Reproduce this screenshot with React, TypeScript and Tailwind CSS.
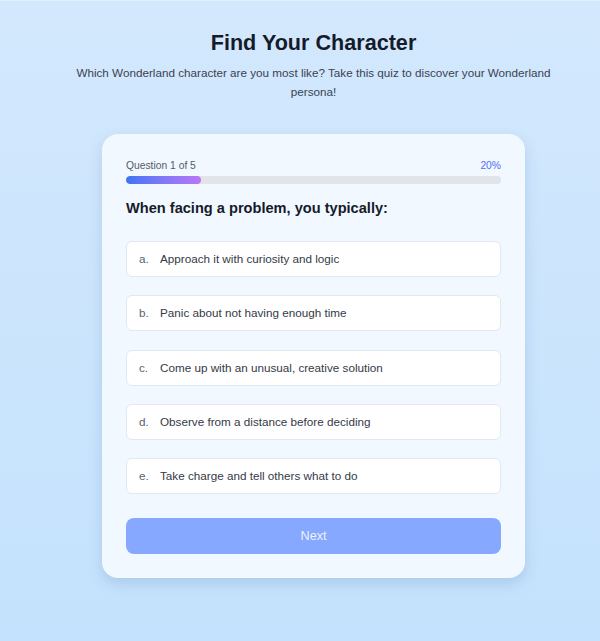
import { useState } from "react";

const question = {
  text: "When facing a problem, you typically:",
  options: [
    "Approach it with curiosity and logic",
    "Panic about not having enough time",
    "Come up with an unusual, creative solution",
    "Observe from a distance before deciding",
    "Take charge and tell others what to do",
  ],
};

const letters = ["a", "b", "c", "d", "e"];

export default function App() {
  const [selected, setSelected] = useState<number | null>(null);

  return (
    <div
      className="min-h-[641px] bg-gradient-to-b from-[#d3e8fd] to-[#c4e2fd] pt-[28px] pb-10 pl-[27px] border-t border-[#e4f0fc]"
      style={{ fontFamily: '"Liberation Sans", Arial, sans-serif' }}
    >
      {/* ── Header ── */}
      <div className="text-center px-6">
        <h1 className="text-[21.6px] leading-[28px] font-bold text-[#161b2a]">
          Find Your Character
        </h1>
        <p className="mt-[6px] mx-auto max-w-[500px] text-[11.7px] leading-[19px] text-[#3b4252]">
          Which Wonderland character are you most like? Take this quiz to discover your Wonderland
          persona!
        </p>
      </div>

      {/* ── Card ── */}
      <div className="mx-auto mt-[33px] w-[423px] rounded-2xl bg-[#f1f8ff] px-6 pt-[25px] pb-[24px] shadow-[0_6px_14px_rgba(80,120,170,0.22)]">
        {/* Progress */}
        <div className="flex items-center justify-between text-[10.3px] leading-[14px]">
          <span className="text-[#555b66]">Question 1 of 5</span>
          <span className="text-[#4f6ef2]">20%</span>
        </div>
        <div className="mt-[3px] h-2 w-full rounded-full bg-[#e2e4e8] overflow-hidden">
          <div className="h-full w-1/5 rounded-full bg-gradient-to-r from-[#3b74f6] to-[#b877f7]" />
        </div>

        {/* Question */}
        <h2 className="mt-[13px] text-[14.6px] leading-[22px] font-bold text-[#161b2a]">
          {question.text}
        </h2>

        {/* Options */}
        <div className="mt-[22px] flex flex-col gap-[18.25px]">
          {question.options.map((opt, i) => (
            <button
              key={i}
              onClick={() => setSelected(i)}
              className={`flex items-center h-[36px] rounded-md border px-3 text-left bg-white ${
                selected === i ? "border-blue-400" : "border-[#e3e8ef]"
              }`}
            >
              <span className="w-[21px] text-[11.7px] text-[#5b6170]">{letters[i]}.</span>
              <span className="text-[11.7px] text-[#343a47]">{opt}</span>
            </button>
          ))}
        </div>

        {/* Next */}
        <button
          disabled={selected === null}
          className="mt-[24px] w-full h-[36px] rounded-lg bg-[#86a8ff] text-[12.6px] text-[#eef3ff]"
        >
          Next
        </button>
      </div>
    </div>
  );
}
